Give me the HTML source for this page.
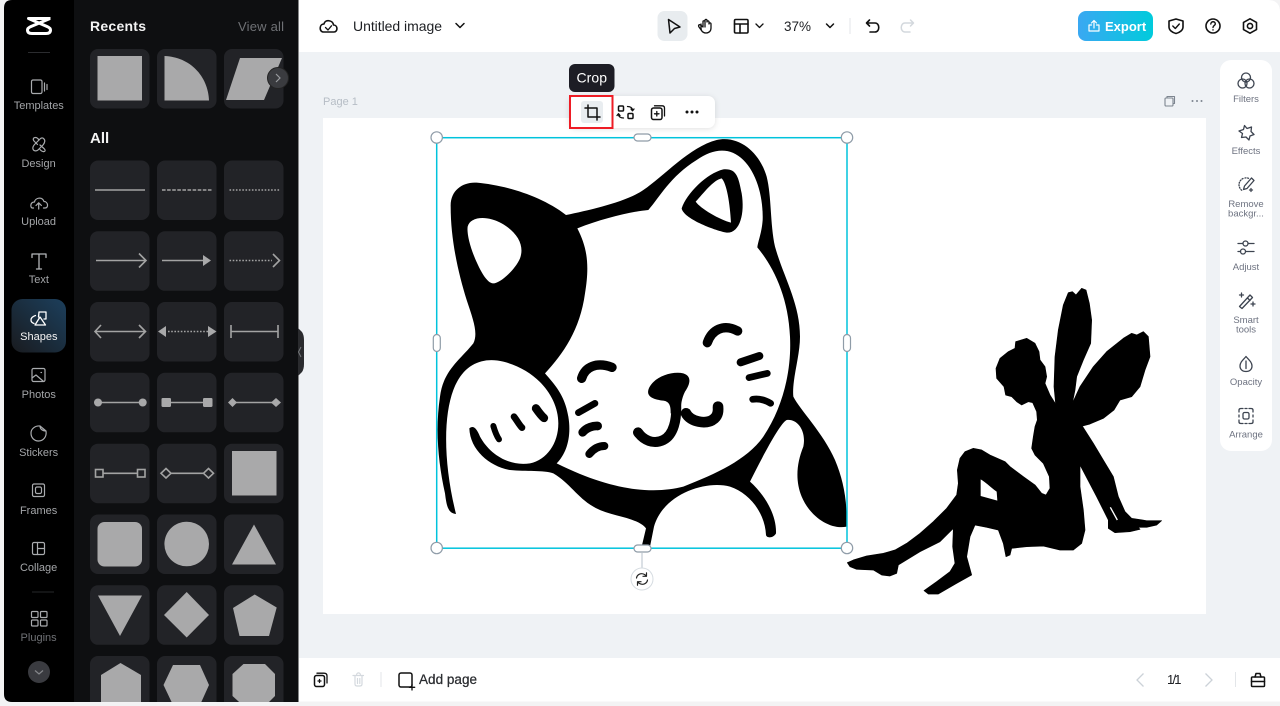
<!DOCTYPE html>
<html><head><meta charset="utf-8"><title>Untitled image</title>
<style>
html,body{margin:0;padding:0;width:1280px;height:706px;overflow:hidden;background:#f3f3f4}
svg{position:absolute;left:0;top:0;display:block}
text{font-family:"Liberation Sans",sans-serif}
.r{font-size:11px;fill:#a3a5a8;text-anchor:middle}
.p{font-size:9.5px;fill:#6d7280;text-anchor:middle}
.ri{fill:none;stroke:#a9abae;stroke-width:1.2;stroke-linecap:round;stroke-linejoin:round}
.pi{fill:none;stroke:#3d4450;stroke-width:1.3;stroke-linecap:round;stroke-linejoin:round}
.ti{fill:none;stroke:#111;stroke-width:1.6;stroke-linecap:round;stroke-linejoin:round}
.c{fill:#222327}
.s{fill:#a9a9aa}
.l{fill:none;stroke:#a3a3a3;stroke-width:1.6}
.m{fill:none;stroke:#000;stroke-linecap:round;stroke-linejoin:round}
</style></head><body>
<svg width="1280" height="706" viewBox="0 0 1280 706" xmlns="http://www.w3.org/2000/svg">
<defs>
<linearGradient id="ex" x1="0" y1="0" x2="1" y2="0"><stop offset="0" stop-color="#3aa8f2"/><stop offset="1" stop-color="#00cbdc"/></linearGradient>
<linearGradient id="ac" x1="1" y1="0" x2="0" y2="1"><stop offset="0" stop-color="#1c3f5c"/><stop offset="1" stop-color="#191b1f"/></linearGradient>
<clipPath id="pc"><rect x="74" y="0" width="224" height="702"/></clipPath>
</defs>

<!-- main surfaces -->
<path d="M290,0H1268Q1280,0 1280,12V701.5H290Z" fill="#fff"/>
<rect x="299" y="52" width="981" height="606" fill="#eff2f5"/>
<rect x="323" y="118" width="883" height="496" fill="#fff"/>

<!-- sidebar -->
<path d="M12,0H298.500V702H12Q4,702 4,694V8Q4,0 12,0Z" fill="#000"/>
<rect x="74" y="0" width="224.500" height="702" fill="#0e0f11"/>
<path d="M298,328L302,332Q304,335 304,340V364Q304,369 302,372L298,376Z" fill="#2a2b2e"/>
<path d="M301,347L298.500,352L301,357" fill="none" stroke="#77797c" stroke-width="1"/>

<!-- logo -->
<g fill="none" stroke="#fff" stroke-width="3" stroke-linejoin="round" stroke-linecap="butt">
<path d="M50.500,18.500H28.500L47,26.500Q50.500,28 50.500,30Q50.500,33.500 46,33.500H32Q27.500,33.500 27.500,30Q27.500,28 31,26.500L50,18.500"/>
</g>
<rect x="28" y="52" width="22" height="1" fill="#2b2c2f"/>

<!-- rail icons -->
<rect x="11.500" y="299" width="54.500" height="53.500" rx="11" fill="url(#ac)"/>
<g class="ri">
<rect x="31.500" y="80" width="10.500" height="13.500" rx="1.500"/><path d="M44.500,83V91M47,84.500V89.500"/>
<path d="M43.500,138.500C45.500,140 45,142.500 43,145L38,150C36,151.500 33.500,151 33,149C32.500,147.500 33.500,145.500 35,144L40,139C41,138 42.500,137.500 43.500,138.500Z"/>
<path d="M37.500,144.500L34,141C32.500,139 33.500,137.500 35.500,137.500C37,137.500 38,138.500 39,140M40,145L44,148.500C46,150.500 45,152 43,151.500C41.500,151.500 41,150.500 40,149.500"/>
<path d="M33.500,208H32.500C30,208 30,202 34.500,202C35,198 42,196 44,201.500C48,201.500 49,208 45,208H43.500M38.700,209V203M36,205.500L38.700,202.800L41.400,205.500"/>
<path d="M32,257.500V254H46V257.500M39,254V269M36.500,269H41.500" stroke="#b4b6b9" stroke-width="1.300"/>
</g>
<g fill="none" stroke="#fff" stroke-width="1.300" stroke-linejoin="round" stroke-linecap="round">
<path d="M35.500,315.500Q31,317 31,320Q31,322.500 34,323.500"/>
<path d="M38.500,317L39,312H46V319H44"/>
<path d="M40,317L45.500,325H35Z"/>
</g>
<g class="ri">
<rect x="32" y="368.500" width="13" height="13" rx="1.500"/><path d="M32,378L36,375L43,381M41,372.500h.5"/>
<path d="M46,431C47,437 43,441 38.500,441C34,441 31,437.500 31,433C31,429 35,425.500 40,426C40,429 42.500,431 46,431ZM40,426L46,431"/>
<rect x="32.500" y="484" width="12" height="12.500" rx="1.500"/><rect x="35.500" y="487" width="6" height="6.500" rx="1.500"/>
<rect x="32.500" y="542.500" width="12" height="12" rx="1.500"/><path d="M37.500,542.500V554.500M37.500,548.500H44.500"/>
<rect x="31.500" y="611.500" width="6.500" height="6" rx="1"/><rect x="40.500" y="611.500" width="6.500" height="6" rx="1"/><rect x="31.500" y="620" width="6.500" height="6" rx="1"/><rect x="40.500" y="620" width="6.500" height="6" rx="1"/>
</g>
<rect x="32" y="591.500" width="22" height="1" fill="#26272a"/>
<circle cx="39" cy="672" r="11" fill="#3a3b40"/>
<path d="M35,670.500L39,674L43,670.500" fill="none" stroke="#85878b" stroke-width="1.200"/>

<text class="r" x="38.800" y="109" textLength="50">Templates</text>
<text class="r" x="38.600" y="167">Design</text>
<text class="r" x="38.600" y="225">Upload</text>
<text class="r" x="38.800" y="283">Text</text>
<text class="r" x="38.800" y="340" style="fill:#f4f4f4">Shapes</text>
<text class="r" x="38.800" y="398">Photos</text>
<text class="r" x="38.600" y="456" textLength="39">Stickers</text>
<text class="r" x="38.600" y="514">Frames</text>
<text class="r" x="38.600" y="571">Collage</text>
<text class="r" x="38.600" y="641" style="fill:#6f7175">Plugins</text>

<!-- panel -->
<text x="90" y="31" font-size="14" font-weight="700" fill="#f3f3f3" textLength="56">Recents</text>
<text x="238" y="31" font-size="13" fill="#6f7175" textLength="46">View all</text>
<text x="90" y="143" font-size="15" font-weight="700" fill="#f3f3f3">All</text>

<g clip-path="url(#pc)">
<!-- cells -->
<rect class="c" x="90" y="49" width="59.500" height="59.500" rx="8"/><rect class="c" x="157" y="49" width="59.500" height="59.500" rx="8"/><rect class="c" x="224" y="49" width="59.500" height="59.500" rx="8"/>
<rect class="c" x="90" y="160.500" width="59.500" height="59.500" rx="8"/><rect class="c" x="157" y="160.500" width="59.500" height="59.500" rx="8"/><rect class="c" x="224" y="160.500" width="59.500" height="59.500" rx="8"/>
<rect class="c" x="90" y="231.300" width="59.500" height="59.500" rx="8"/><rect class="c" x="157" y="231.300" width="59.500" height="59.500" rx="8"/><rect class="c" x="224" y="231.300" width="59.500" height="59.500" rx="8"/>
<rect class="c" x="90" y="302" width="59.500" height="59.500" rx="8"/><rect class="c" x="157" y="302" width="59.500" height="59.500" rx="8"/><rect class="c" x="224" y="302" width="59.500" height="59.500" rx="8"/>
<rect class="c" x="90" y="372.800" width="59.500" height="59.500" rx="8"/><rect class="c" x="157" y="372.800" width="59.500" height="59.500" rx="8"/><rect class="c" x="224" y="372.800" width="59.500" height="59.500" rx="8"/>
<rect class="c" x="90" y="443.700" width="59.500" height="59.500" rx="8"/><rect class="c" x="157" y="443.700" width="59.500" height="59.500" rx="8"/><rect class="c" x="224" y="443.700" width="59.500" height="59.500" rx="8"/>
<rect class="c" x="90" y="514.500" width="59.500" height="59.500" rx="8"/><rect class="c" x="157" y="514.500" width="59.500" height="59.500" rx="8"/><rect class="c" x="224" y="514.500" width="59.500" height="59.500" rx="8"/>
<rect class="c" x="90" y="585.300" width="59.500" height="59.500" rx="8"/><rect class="c" x="157" y="585.300" width="59.500" height="59.500" rx="8"/><rect class="c" x="224" y="585.300" width="59.500" height="59.500" rx="8"/>
<rect class="c" x="90" y="656" width="59.500" height="59.500" rx="8"/><rect class="c" x="157" y="656" width="59.500" height="59.500" rx="8"/><rect class="c" x="224" y="656" width="59.500" height="59.500" rx="8"/>

<!-- recents -->
<rect class="s" x="97.500" y="56" width="44.500" height="44.500"/>
<path class="s" d="M164.500,56C190,57 208,76 209,100.500H164.500Z"/>
<path class="s" d="M240,58H282L264,100H226Z"/>

<!-- lines row -->
<path class="l" d="M95,190H145"/>
<path class="l" d="M162,190H212" stroke-dasharray="3.600 1.500"/>
<path class="l" d="M229.500,190H279.500" stroke-dasharray="1.600 1.600"/>

<path class="l" d="M96,260.500H145M139,253.500L146,260.500L139,267.500"/>
<path class="l" d="M162,260.500H204"/><path class="s" d="M203,255L211,260.500L203,266Z"/>
<path class="l" d="M229.500,260.500H272" stroke-dasharray="1.600 1.600"/><path class="l" d="M273,254L279.500,260.500L273,267"/>

<path class="l" d="M95,331.500H145M101,325L95,331.500L101,338M139,325L145.500,331.500L139,338"/>
<path class="l" d="M168,331.500H208" stroke-dasharray="1.600 1.600"/><path class="s" d="M166,326V337L158,331.500Z"/><path class="s" d="M208,326V337L216.500,331.500Z"/>
<path class="l" d="M231,331.500H278M231,325V338M278,325V338"/>

<path class="l" d="M98,402.500H142"/><circle class="s" cx="98" cy="402.500" r="4"/><circle class="s" cx="142.700" cy="402.500" r="4"/>
<path class="l" d="M166,402.500H208"/><rect class="s" x="161.500" y="398" width="9.500" height="9" rx="1.200"/><rect class="s" x="203" y="398" width="9.500" height="9" rx="1.200"/>
<path class="l" d="M232,402.500H276"/><path class="s" d="M232.500,398L237,402.500L232.500,407L228,402.500Z"/><path class="s" d="M276,398L281,402.500L276,407L271,402.500Z"/>

<path class="l" d="M103,473.300H137"/><rect class="l" x="95.500" y="469.500" width="7.500" height="7.500"/><rect class="l" x="137.500" y="469.500" width="7.500" height="7.500"/>
<path class="l" d="M171,473.300H204"/><path class="l" d="M166,468.500L171,473.300L166,478L161,473.300Z"/><path class="l" d="M208.500,468.500L213.500,473.300L208.500,478L203.500,473.300Z"/>
<rect class="s" x="232" y="451" width="44.500" height="44.500"/>

<rect class="s" x="97.500" y="522" width="44.500" height="44.500" rx="7"/>
<circle class="s" cx="186.700" cy="544" r="22.300"/>
<path class="s" d="M254,524.500L276,564.500H232Z"/>

<path class="s" d="M98,595.500H142L120,636Z"/>
<path class="s" d="M186.700,592L209,615L186.700,637.500L164,615Z"/>
<path class="s" d="M254.700,594.500L276.700,607.500L269,636H239.500L233,608Z"/>

<path class="s" d="M120.500,663L141,675V705L120.500,717L101,705V675Z"/>
<path class="s" d="M173,665H200L209,685L200,705H173L163.500,685Z"/>
<path class="s" d="M243.500,664H265L275,674V696L265,706H243.500L232.500,696V674Z"/>
</g>
<circle cx="278" cy="78" r="10.500" fill="#3a3b3f" stroke="#222" stroke-width="1"/>
<path d="M276,74L280,78L276,82" fill="none" stroke="#9a9ca0" stroke-width="1.200"/>

<!-- top bar -->
<g class="ti">
<path d="M323.500,32H334C338,32 338,25 333.500,25C333,20 325,19 324,24C319,24 319,32 323.500,32Z"/>
<path d="M325.500,27.500L328,30L331.500,25.800" stroke-width="1.300"/>
<path d="M456,23.500L460,27.500L464,23.500" stroke-width="1.500"/>
</g>
<text x="353" y="31" font-size="14" fill="#1d1f23" textLength="89">Untitled image</text>
<rect x="657.500" y="11" width="30" height="30" rx="7" fill="#e8ecef"/>
<g class="ti">
<path d="M668.500,19.500L680,27L674.500,28.500L670,33Z" stroke-width="1.500"/>
<path d="M701,24V28C701,31 703,33 706,33C709,33 711,31 711,28V24C711,22.500 709,22.500 709,24V22C709,20.500 707,20.500 707,22V20.500C707,19 705,19 705,20.500V27M705,21.500C705,20.500 703,20.500 703,21.500V27M703,27L700.500,25C699,24 698,25.500 699,27L701.500,30.500" stroke-width="1.300"/>
<rect x="734.500" y="19.500" width="13.500" height="13.500" rx="1.200"/><path d="M734.500,24H748M740,24V33"/>
<path d="M756,24L759.500,27.500L763,24" stroke-width="1.300"/>
<path d="M826.500,24L830,27.500L833.500,24" stroke-width="1.500"/>
<path d="M869.500,20L866.500,23L869.500,26M867,23H875C880,23 880,32 875,32H870"/>
</g>
<text x="784" y="31" font-size="13.500" fill="#1d1f23">37%</text>
<rect x="849.500" y="18" width="1" height="16" fill="#e3e6e9"/>
<path d="M910.500,20L913.500,23L910.500,26M913,23H905C900,23 900,32 905,32H910" fill="none" stroke="#d3d8dd" stroke-width="1.500" stroke-linecap="round" stroke-linejoin="round"/>

<rect x="1078" y="11" width="75" height="30" rx="8" fill="url(#ex)"/>
<path d="M1089,25V31H1099V25H1096.500M1091.500,25H1089M1094,28V20.500M1091.500,23L1094,20.500L1096.500,23" fill="none" stroke="#fff" stroke-width="1.200" stroke-linecap="round" stroke-linejoin="round"/>
<text x="1105" y="31" font-size="13" font-weight="700" fill="#fff">Export</text>
<g class="ti">
<path d="M1176,19L1183,21V27C1183,30 1180,32.500 1176,33.500C1172,32.500 1169,30 1169,27V21Z"/><path d="M1172.800,26L1175.300,28.500L1179.300,24" stroke-width="1.400"/>
<circle cx="1213" cy="26" r="7"/><path d="M1210.800,24C1211,21 1215.300,21 1215.300,24C1215.300,25.500 1213,25.500 1213,27.500M1213,29.800V30" stroke-width="1.400"/>
<path d="M1250,18.800L1256.500,22.400V29.600L1250,33.200L1243.500,29.600V22.400Z"/><circle cx="1250" cy="26" r="2.600"/>
</g>

<!-- page header -->
<text x="323" y="105" font-size="11" fill="#b6bdc5">Page 1</text>
<g fill="none" stroke="#7d858f" stroke-width="1.100" stroke-linejoin="round">
<rect x="1165" y="98" width="8" height="8" rx="1"/><path d="M1167,98V96.500H1174.500V103.500H1173"/>
</g>
<g fill="#7d858f"><circle cx="1192.500" cy="101" r="1"/><circle cx="1197" cy="101" r="1"/><circle cx="1201.500" cy="101" r="1"/></g>

<!-- cat -->
<svg x="430" y="130" width="425" height="430" viewBox="0 0 1275 1290">
<path d="M62,230C60,180 100,155 140,158C220,165 330,195 408,255C480,240 590,215 640,180C700,140 780,50 860,30C930,15 990,70 1010,140C1025,200 1020,280 1035,350C1060,440 1110,520 1110,620C1110,680 1085,750 1090,800C1110,840 1180,910 1215,990C1240,1050 1252,1110 1250,1190C1200,1200 1140,1160 1115,1100C1095,1050 1100,1000 1120,950C1130,900 1100,865 1070,870C1050,880 1000,975 960,1055C1010,1100 1040,1160 1038,1210C1030,1225 1010,1225 1008,1215C1005,1150 960,1090 900,1070C830,1050 700,1090 672,1190L660,1250H635L648,1195C620,1160 540,1160 490,1130C440,1100 420,1060 370,1030C340,1020 290,1025 240,1020C180,1010 120,960 118,895C130,885 140,895 150,920C180,975 240,1010 300,1000C350,990 385,940 385,880C385,800 320,720 220,695C160,680 100,700 70,780C40,860 40,1000 78,1152C55,1150 50,1130 45,1090C25,1000 15,900 30,800C40,720 90,690 130,640C145,610 130,570 110,510C85,430 62,330 62,230Z" fill="#000"/>
<path d="M442,295C520,265 600,245 655,240C690,200 720,140 800,90C850,55 900,50 940,90C980,130 1000,200 998,270C995,310 985,330 982,352C1030,410 1075,500 1080,620C1085,720 1060,830 1000,920C950,990 860,1030 760,1070C680,1090 560,1090 380,1000C410,970 425,920 415,860C405,800 380,770 345,730C400,670 450,600 465,490C480,400 470,350 442,295Z" fill="#fff"/>
<path d="M113,290C120,260 170,255 215,280C260,305 285,345 270,385C255,420 210,460 190,460C170,460 150,420 135,385C120,350 110,310 113,290Z" fill="#fff"/>
<path d="M755,235C770,190 830,130 880,118C920,115 925,140 935,190C945,250 930,310 890,308C850,300 760,265 755,235Z" fill="#000"/>
<path d="M797,215C820,190 850,150 875,145C890,160 900,220 903,278C870,270 810,235 797,215Z" fill="#fff"/>
<path class="m" stroke-width="25" d="M318,835C325,845 335,858 342,864"/>
<path class="m" stroke-width="20" d="M252,860C260,870 268,885 276,893"/>
<path class="m" stroke-width="18" d="M190,888C195,905 200,918 207,928"/>
<path class="m" stroke-width="28" d="M455,745C465,710 500,695 546,712"/>
<path class="m" stroke-width="28" d="M832,638C845,600 880,580 923,603"/>
<path class="m" stroke-width="20" d="M445,848L495,820"/>
<path class="m" stroke-width="26" d="M458,907C470,892 490,887 503,888"/>
<path class="m" stroke-width="24" d="M478,972C490,957 505,948 523,948"/>
<path class="m" stroke-width="24" d="M932,697L988,678"/>
<path class="m" stroke-width="20" d="M957,743L1012,730"/>
<path class="m" stroke-width="20" d="M968,808C985,805 1005,810 1022,820"/>
<path d="M655,780C665,745 720,722 760,730C785,738 782,760 765,785C755,805 752,825 752,850H722C722,830 720,815 700,812C670,808 650,800 655,780Z" fill="#000"/>
<path class="m" stroke-width="30" d="M738,815C742,870 730,915 700,930C670,945 640,930 624,907"/>
<path class="m" stroke-width="32" d="M768,850C780,875 830,885 850,868C865,858 865,840 864,830"/>
</svg>

<!-- fairy -->
<svg x="840" y="280" width="330" height="320" viewBox="0 0 990 960">
<path d="M22,848L40,840L80,828L130,820L165,810L200,790L240,760L280,725L320,685L350,645L355,610L352,570L360,535L375,515L400,505L425,510L450,525L495,545L510,560L550,590L585,615L605,640L618,645L630,625L628,590L610,550L585,525L575,505L580,470L585,440L592,420L590,395L578,368L565,365L545,375L530,365L515,350L497,345L492,320L470,295L468,265L480,235L505,215L525,205L527,185L560,175L585,190L597,215L600,240L615,260L620,290L615,310L630,345L647,372L642,320L645,230L655,150L670,75L685,38L697,35L708,45L725,25L738,30L748,70L755,120L752,190L730,240L710,290L705,330L697,370L720,320L760,260L800,215L850,175L875,160L890,165L910,155L925,170L930,230L915,270L900,320L875,350L840,360L822,390L790,415L750,432L727,438L760,490L790,540L820,590L835,650L855,695L875,715L920,722L965,722L950,735L920,742L895,742L900,748L870,755L825,758L805,745L805,720L770,650L720,555L720,620L730,690L735,750L725,790L700,810L660,810L610,798L560,800L515,805L510,825L498,830L490,790L475,750L440,742L405,735L390,770L380,830L395,885L350,910L295,942L265,942L252,932L290,905L330,875L345,850L338,800L340,745L300,785L240,815L175,855L170,880L150,888L125,885L100,870L50,868L30,860Z" fill="#000" stroke="#000" stroke-width="2" stroke-linejoin="round"/>
<path d="M422,598V648L472,662L470,635C450,620 435,605 422,598Z" fill="#fff"/>
<path d="M811,682L832,720" stroke="#fff" stroke-width="4" fill="none"/>
</svg>

<!-- selection -->
<rect x="436.700" y="137.700" width="410.300" height="410.500" fill="none" stroke="#00c3dc" stroke-width="1.500"/>
<path d="M642,553V568" stroke="#cfd6dc" stroke-width="1.500"/>
<g fill="#fff" stroke="#8f9ca8" stroke-width="1.200">
<circle cx="436.700" cy="137.500" r="5.700"/><circle cx="847" cy="137.500" r="5.700"/><circle cx="436.700" cy="548" r="5.700"/><circle cx="847" cy="548" r="5.700"/>
<rect x="634" y="134" width="17" height="7" rx="3.500"/><rect x="634" y="545" width="17" height="7" rx="3.500"/>
<rect x="433.300" y="334.500" width="7" height="17" rx="3.500"/><rect x="843.500" y="334.500" width="7" height="17" rx="3.500"/>
</g>
<circle cx="642" cy="579" r="11" fill="#fff" stroke="#d6dce1" stroke-width="1"/>
<path d="M636.500,578C637,574.500 641,572.500 644.500,574.500L646.500,576M646.500,572.800V576.300H643M647.500,580C647,583.500 643,585.500 639.500,583.500L637.500,582M637.500,585.200V581.700H641" fill="none" stroke="#222" stroke-width="1.200" stroke-linecap="round" stroke-linejoin="round"/>

<!-- floating toolbar -->
<rect x="569" y="96" width="146" height="32" rx="7" fill="#fff" style="filter:drop-shadow(0 1px 3px rgba(0,0,0,.12))"/>
<rect x="569" y="64" width="45.500" height="28" rx="6" fill="#1d1d25"/>
<text x="576.500" y="82.500" font-size="14" fill="#fff" textLength="30.500">Crop</text>
<rect x="581" y="101" width="22" height="22" rx="3" fill="#e9edf0"/>
<g class="ti" style="stroke-width:1.500">
<path d="M588,105V117H600M585,108H597V120"/>
<rect x="618.500" y="106" width="5" height="5" rx="1"/><rect x="628" y="113.500" width="5" height="5" rx="1"/>
<path d="M627.500,106.500C630,106.500 632.500,107.500 632.500,110.500M631,109L632.500,110.800L634,109M623.500,118C621,118 618.500,117 618.500,114M617,115.500L618.500,113.700L620,115.500" stroke-width="1.300"/>
<rect x="651.500" y="108" width="10.500" height="11.500" rx="2"/><path d="M654.500,105.800H662C663.800,105.800 664.500,106.800 664.500,108V116M654.500,113.800H659M656.800,111.500V116" stroke-width="1.300"/>
</g>
<g fill="#111"><circle cx="687" cy="112" r="1.500"/><circle cx="692" cy="112" r="1.500"/><circle cx="697" cy="112" r="1.500"/></g>
<rect x="570" y="96" width="42.500" height="32" fill="none" stroke="#ee1c25" stroke-width="2"/>

<!-- right panel -->
<rect x="1220" y="60" width="52" height="391" rx="11" fill="#fff"/>
<g class="pi">
<circle cx="1246" cy="77.500" r="4.500"/><circle cx="1242.500" cy="83.500" r="4.500"/><circle cx="1249.500" cy="83.500" r="4.500"/>
<path d="M1244.500,125.500L1247,128.500L1251.500,127L1251,131.500L1254,134.500L1250,136L1249,140L1246,137L1241.500,137.500L1242.500,133.500L1239,131L1243.500,129.500Z"/>
<path d="M1243,178.500A7,7 0 0,0 1239,185A7,7 0 0,0 1243,191" stroke-dasharray="1 1.600"/><path d="M1245,178A7,7 0 0,1 1249,178.500" stroke-dasharray="1 1.600"/>
<path d="M1251.500,178L1254,180.500L1247,188.500L1243.500,189.500L1244.500,186Z"/><path d="M1251,188.500V191.500M1249.500,190H1252.500"/>
<path d="M1238,243.500H1242.500M1248.500,243.500H1254M1238,251.500H1240.500M1246,251.500H1254"/><circle cx="1245.500" cy="243.500" r="2.500"/><circle cx="1243" cy="251.500" r="2.500"/>
<path d="M1239.500,306.500L1250,295L1252.500,297.500L1242,308.500ZM1247.500,298L1250,300.500M1241.500,293V297M1239.500,295H1243.500M1253,302V306M1251,304H1255"/>
<path d="M1246,356.500C1248.500,359.500 1252,362 1252,366C1252,369.500 1249.500,371.500 1246,371.500C1242.500,371.500 1240,369.500 1240,366C1240,362 1243.500,359.500 1246,356.500Z"/>
<path d="M1246,361V368.500"/>
<path d="M1239,412V410C1239,409 1240,408.500 1241,408.500H1243M1249,408.500H1251C1252,408.500 1253,409 1253,410V412M1253,420V422C1253,423 1252,423.500 1251,423.500H1249M1243,423.500H1241C1240,423.500 1239,423 1239,422V420M1239,415V417M1253,415V417M1245,408.500H1247M1245,423.500H1247"/>
<rect x="1243" y="412.500" width="6" height="6.500" rx="1.500"/>
</g>
<text class="p" x="1246" y="102">Filters</text>
<text class="p" x="1246" y="154">Effects</text>
<text class="p" x="1246" y="207">Remove</text>
<text class="p" x="1246" y="216.500">backgr...</text>
<text class="p" x="1246" y="270">Adjust</text>
<text class="p" x="1246" y="323">Smart</text>
<text class="p" x="1246" y="332.500">tools</text>
<text class="p" x="1246" y="385">Opacity</text>
<text class="p" x="1246" y="437.500">Arrange</text>

<!-- bottom bar -->
<rect x="299" y="658" width="981" height="43.500" fill="#fff"/>
<g class="ti" style="stroke-width:1.500">
<rect x="314.500" y="675.500" width="10" height="11" rx="2"/><path d="M317,673.200H324C326,673.200 327,674.200 327,676V683M318,681H321M319.500,679.500V682.500" stroke-width="1.300"/>
<rect x="399" y="673" width="13" height="14" rx="2"/><path d="M412,684.500V690M409.300,687.300H414.700" stroke-width="1.300"/>
<rect x="1251.500" y="677" width="13" height="9.500" rx="1"/><path d="M1251.500,681.500H1264.500M1255,677L1256,673.500H1260L1261,677"/>
</g>
<path d="M353,675.500H363.500M355,675.500V684C355,685.500 356,686 357,686H360C361,686 362,685.500 362,684V675.500M356.500,675.500C356.500,672 360.500,672 360.500,675.500M357.500,678.500V683.500M359.800,678.500V683.500" fill="none" stroke="#d4d9de" stroke-width="1.200" stroke-linecap="round"/>
<rect x="380.500" y="672" width="1" height="15" fill="#e3e6e9"/>
<text x="419" y="684" font-size="13.500" fill="#2a2c30" textLength="58" style="stroke:#2a2c30;stroke-width:.25">Add page</text>
<path d="M1143.500,673.500L1137,680L1143.500,686.500M1205.500,673.500L1212,680L1205.500,686.500" fill="none" stroke="#ccd2d8" stroke-width="1.300"/>
<text x="1167" y="684" font-size="13" fill="#1d1f23" textLength="14.500">1/1</text>
<rect x="1235" y="672" width="1" height="15" fill="#e3e6e9"/>
</svg>
</body></html>
